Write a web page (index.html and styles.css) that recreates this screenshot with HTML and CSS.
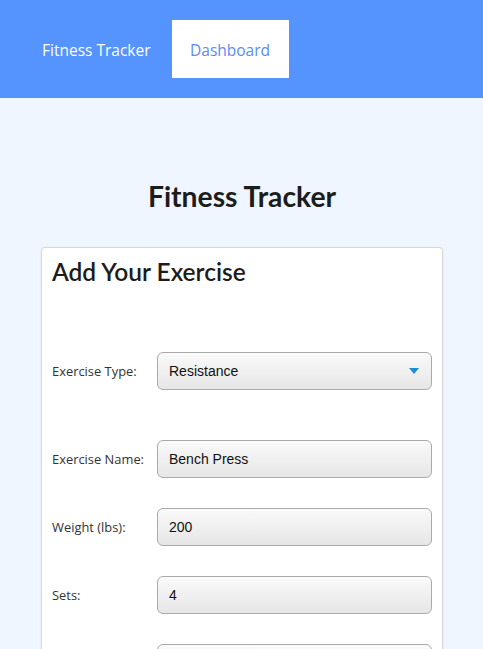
FILE: index.html
```html
<!DOCTYPE html>
<html>
<head>
<meta charset="utf-8">
<link rel="stylesheet" href="styles.css">
</head>
<body>
<nav class="nav">
  <a class="nav-brand">Fitness Tracker</a>
  <a class="nav-link active">Dashboard</a>
</nav>
<main class="main">
  <h1 class="page-title">Fitness Tracker</h1>
  <section class="card">
    <h2 class="card-title">Add Your Exercise</h2>
    <div class="row row-type">
      <label class="label">Exercise Type:</label>
      <div class="field select">
        <span>Resistance</span>
        <svg class="caret" width="10" height="6" viewBox="0 0 10 6"><path d="M0 0H10L5 6Z" fill="#1a8fd0"/></svg>
      </div>
    </div>
    <div class="row">
      <label class="label">Exercise Name:</label>
      <div class="field">Bench Press</div>
    </div>
    <div class="row">
      <label class="label">Weight (lbs):</label>
      <div class="field">200</div>
    </div>
    <div class="row">
      <label class="label">Sets:</label>
      <div class="field">4</div>
    </div>
    <div class="row">
      <label class="label">Reps:</label>
      <div class="field">8</div>
    </div>
  </section>
</main>
</body>
</html>
```

FILE: styles.css
```css
* { box-sizing: border-box; }
html, body { margin: 0; padding: 0; }
body {
  background: #eff6ff;
  font-family: "Open Sans", sans-serif;
  overflow: hidden;
  height: 649px;
}
.nav {
  background: #5593fe;
  height: 98px;
  display: flex;
  align-items: center;
  padding-left: 42px;
}
.nav-brand {
  color: #fff;
  font-size: 15.5px;
  margin-right: 21px;
  padding-top: 2px;
}
.nav-link {
  color: #5b8cf5;
  font-size: 15.5px;
  background: #fff;
  height: 58px;
  width: 117px;
  display: flex;
  align-items: center;
  justify-content: center;
  padding-top: 2px;
}
.main {
  padding: 0 40px 0 41px;
}
.page-title {
  font-family: Lato, sans-serif;
  font-weight: 700;
  font-size: 28.3px;
  color: #1c1c1c;
  text-align: center;
  margin: 80px 0 33px;
  line-height: 36px;
}
.card {
  background: #fff;
  border: 1px solid #d8d8d8;
  border-radius: 4px;
  box-shadow: 0 1px 3px rgba(0,0,0,0.08);
  padding: 8px 10px 20px;
}
.card-title {
  font-family: Lato, sans-serif;
  font-weight: 600;
  font-size: 24.5px;
  color: #1c1c1c;
  margin: 0 0 64px;
  line-height: 32px;
}
.row {
  display: flex;
  align-items: center;
  margin-bottom: 30px;
}
.row-type { margin-bottom: 50px; }
.label {
  width: 105px;
  flex: none;
  font-size: 12.9px;
  color: #333;
}
.field {
  flex: 1;
  height: 38px;
  border: 1px solid #aaa;
  border-radius: 6px;
  background: linear-gradient(#fafafa, #e6e6e6);
  font-family: "Liberation Sans", Arial, sans-serif;
  font-size: 14px;
  color: #111;
  display: flex;
  align-items: center;
  padding: 0 11px;
}
.select { justify-content: space-between; }
.caret { margin-right: 1px; }
```
